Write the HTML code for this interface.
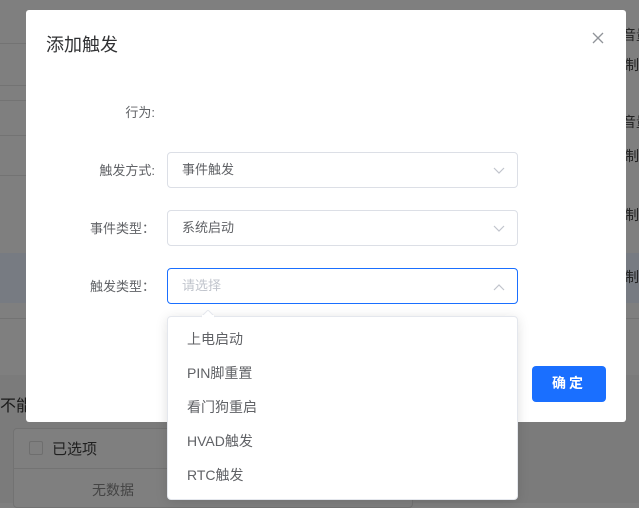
<!DOCTYPE html>
<html><head><meta charset="utf-8"><style>
*{margin:0;padding:0;box-sizing:border-box}
body{width:639px;height:503px;overflow:hidden;background:#7f7f7f;position:relative;font-family:"Liberation Sans","Noto Sans CJK SC",sans-serif}
.a{position:absolute;white-space:nowrap}
.modal{left:26px;top:10px;width:600px;height:412px;background:#fff;border-radius:3px}
.lbl{font-size:13px;color:#606266;text-align:right;width:130px}
.sel{left:167px;width:351px;height:36px;border:1px solid #dcdfe6;border-radius:4px;background:#fff;font-size:13px;color:#606266;padding-left:14px;line-height:33px}
.sel svg{position:absolute;right:12px;top:14px}
.dd{left:167px;top:316px;width:351px;height:184px;background:#fff;border:1px solid #e4e7ed;border-radius:4px;box-shadow:0 2px 12px rgba(0,0,0,.12)}
.it{position:absolute;left:19px;font-size:14px;color:#606266}
</style></head><body>
<div class="a" style="left:0;top:43px;width:26px;height:1px;background:#737373"></div>
<div class="a" style="left:0;top:85px;width:26px;height:1px;background:#737373"></div>
<div class="a" style="left:0;top:100px;width:26px;height:1px;background:#737373"></div>
<div class="a" style="left:0;top:135px;width:26px;height:1px;background:#737373"></div>
<div class="a" style="left:0;top:175px;width:26px;height:1px;background:#737373"></div>
<div class="a" style="left:0;top:253px;width:639px;height:50px;background:#777b82"></div>
<div class="a" style="left:0;top:318px;width:639px;height:1px;background:#737373"></div>
<div class="a" style="left:0;top:375px;width:639px;height:128px;background:#7b7b7b"></div>
<div class="a" style="left:0;top:392px;font-size:16px;color:#1a1a1a">不能</div>
<div class="a" style="left:13px;top:428px;width:400px;height:80px;border:1px solid #727272;border-radius:4px;background:#7f7f7f"></div>
<div class="a" style="left:13px;top:468px;width:400px;height:1px;background:#737373"></div>
<div class="a" style="left:29px;top:441px;width:14px;height:14px;border:1px solid #6e6e6e;border-radius:2px"></div>
<div class="a" style="left:52px;top:438px;font-size:15px;color:#1f1f1f">已选项</div>
<div class="a" style="left:92px;top:480px;font-size:14px;color:#444">无数据</div>
<div class="a" style="left:622px;top:25px;font-size:14px;color:#222">音量</div>
<div class="a" style="left:622px;top:112px;font-size:14px;color:#222">音量</div>
<div class="a" style="left:625px;top:55px;font-size:14px;color:#222">制</div>
<div class="a" style="left:625px;top:146px;font-size:14px;color:#222">制</div>
<div class="a" style="left:625px;top:205px;font-size:14px;color:#222">制</div>
<div class="a" style="left:625px;top:267px;font-size:14px;color:#222">制</div>
<div class="a modal"></div>
<div class="a" style="left:46px;top:31px;font-size:18px;color:#303133">添加触发</div>
<svg class="a" style="left:592px;top:32px" width="12" height="12"><path d="M1 1L11 11M11 1L1 11" stroke="#909399" stroke-width="1.3"/></svg>
<div class="a lbl" style="left:25px;top:102px">行为:</div>
<div class="a lbl" style="left:25px;top:160px">触发方式:</div>
<div class="a lbl" style="left:25px;top:218px">事件类型：</div>
<div class="a lbl" style="left:25px;top:276px">触发类型：</div>
<div class="a sel" style="top:152px">事件触发<svg width="12" height="8"><path d="M1 1L6 6L11 1" stroke="#c0c4cc" fill="none" stroke-width="1.2"/></svg></div>
<div class="a sel" style="top:210px">系统启动<svg width="12" height="8"><path d="M1 1L6 6L11 1" stroke="#c0c4cc" fill="none" stroke-width="1.2"/></svg></div>
<div class="a sel" style="top:268px;border-color:#1a6fff;color:#c0c4cc">请选择<svg width="12" height="8"><path d="M1 7L6 2L11 7" stroke="#c0c4cc" fill="none" stroke-width="1.2"/></svg></div>
<div class="a" style="left:532px;top:366px;width:74px;height:36px;background:#1a6fff;border-radius:4px;color:#fff;font-size:14px;font-weight:bold;text-align:center;line-height:35px;letter-spacing:3px">确定</div>
<div class="a dd">
<div class="it" style="top:12px">上电启动</div>
<div class="it" style="top:46px">PIN脚重置</div>
<div class="it" style="top:80px">看门狗重启</div>
<div class="it" style="top:114px">HVAD触发</div>
<div class="it" style="top:148px">RTC触发</div>
</div>
<svg class="a" style="left:201px;top:310px" width="14" height="8"><path d="M0 7L7 0L14 7Z" fill="#fff"/><path d="M0 7L7 0L14 7" fill="none" stroke="#e4e7ed"/></svg>
<div class="a" style="left:202px;top:315px;width:12px;height:3px;background:#fff"></div>
</body></html>
